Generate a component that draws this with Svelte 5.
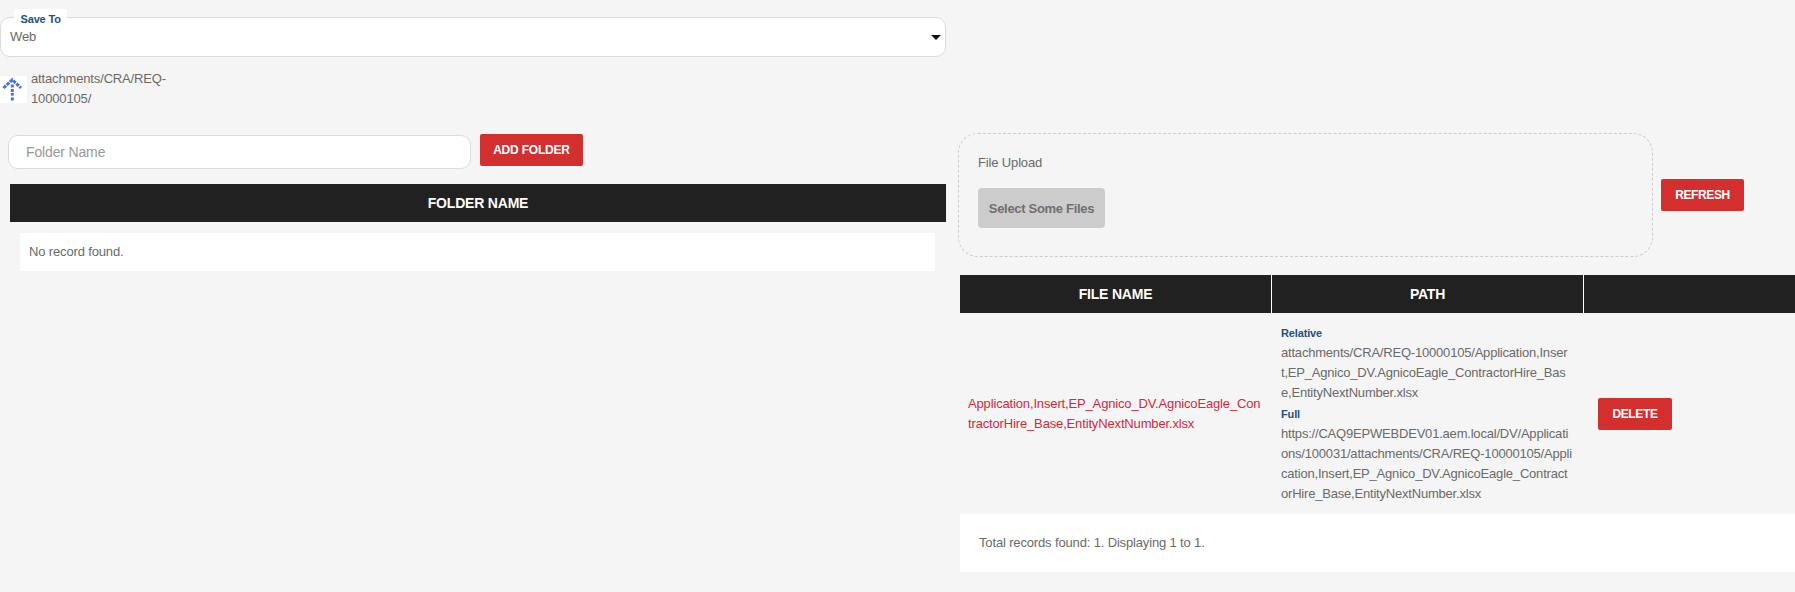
<script lang="ts">
  const path = "attachments/CRA/REQ-10000105/";
  const fileName = "Application,Insert,EP_Agnico_DV.AgnicoEagle_ContractorHire_Base,EntityNextNumber.xlsx";
  // the path cell wraps mid-word, lines kept as they fall on screen
  const relative = [
    "attachments/CRA/REQ-10000105/Application,Inser",
    "t,EP_Agnico_DV.AgnicoEagle_ContractorHire_Bas",
    "e,EntityNextNumber.xlsx",
  ];
  const full = [
    "https://CAQ9EPWEBDEV01.aem.local/DV/Applicati",
    "ons/100031/attachments/CRA/REQ-10000105/Appli",
    "cation,Insert,EP_Agnico_DV.AgnicoEagle_Contract",
    "orHire_Base,EntityNextNumber.xlsx",
  ];
</script>

<div class="page">
  <div class="save-to">
    <span class="legend">Save To</span>
    <div class="select">
      <span>Web</span>
      <i class="caret"></i>
    </div>
  </div>

  <div class="crumb">
    <svg class="up" width="27" height="27" viewBox="0 0 27 27" aria-hidden="true">
      <rect width="27" height="27" fill="#fff" />
      <polyline points="3.5,12 12.3,3.8 21,12" fill="none" stroke="#4a6fe0" stroke-width="3" stroke-dasharray="3.4 1" />
      <g fill="#4a6fe0">
        <rect x="10.8" y="8.5" width="3" height="3" />
        <rect x="10.8" y="13" width="3" height="3" />
        <rect x="10.8" y="17" width="3" height="2.6" />
        <rect x="10.8" y="21.5" width="3" height="3" />
      </g>
    </svg>
    <span class="crumb-text">{path}</span>
  </div>

  <div class="columns">
    <section class="left">
      <div class="add-row">
        <div class="input">Folder Name</div>
        <button class="btn add">ADD FOLDER</button>
      </div>
      <div class="thead single"><div>FOLDER NAME</div></div>
      <div class="empty">No record found.</div>
    </section>

    <section class="right">
      <div class="upload-row">
        <div class="dropzone">
          <div class="dz-label">File Upload</div>
          <button class="pick">Select Some Files</button>
        </div>
        <button class="btn refresh">REFRESH</button>
      </div>

      <div class="thead triple">
        <div>FILE NAME</div>
        <div>PATH</div>
        <div></div>
      </div>
      <div class="row">
        <a class="fname" href="#top">{fileName}</a>
        <div class="paths">
          <div class="cap">Relative</div>
          {#each relative as line}
            <div>{line}</div>
          {/each}
          <div class="cap full">Full</div>
          {#each full as line}
            <div>{line}</div>
          {/each}
        </div>
        <div class="act"><button class="btn del">DELETE</button></div>
      </div>
      <div class="footer">Total records found: 1. Displaying 1 to 1.</div>
    </section>
  </div>
</div>

<style>
  :global(body) {
    margin: 0;
    background: #f5f5f5;
  }
  .page {
    height: 592px;
    overflow: hidden;
    font-family: "Liberation Sans", Arial, sans-serif;
    font-size: 13px;
    line-height: 20px;
    letter-spacing: -0.15px;
    color: #6a6a6a;
    background: #f5f5f5;
  }
  .save-to {
    position: relative;
    width: 946px;
    padding-top: 17px;
  }
  .legend {
    position: absolute;
    left: 14px;
    top: 9px;
    padding: 0 6.5px;
    background: #fff;
    font-size: 11px;
    font-weight: 700;
    line-height: 20px;
    height: 14px;
    color: #1d5180;
  }
  .select {
    height: 40px;
    box-sizing: border-box;
    display: flex;
    justify-content: space-between;
    align-items: flex-start;
    padding: 9px 4px 0 9px;
    background: #fff;
    border: 1px solid #dcdcdc;
    border-radius: 10px;
    line-height: 20px;
  }
  .caret {
    margin-top: 8px;
    width: 0;
    height: 0;
    border-left: 5px solid transparent;
    border-right: 5px solid transparent;
    border-top: 5px solid #111;
  }
  .crumb {
    display: flex;
    align-items: flex-start;
    gap: 4px;
    margin-top: 19px;
    height: 58px;
  }
  .up {
    flex: none;
  }
  .crumb-text {
    width: 140px;
    margin-top: -7px;
  }
  .columns {
    display: flex;
    align-items: flex-start;
  }
  .left {
    width: 946px;
    flex: none;
  }
  .add-row {
    display: flex;
    align-items: flex-start;
    gap: 9px;
    padding-left: 8px;
    height: 50px;
  }
  .input {
    width: 463px;
    height: 34px;
    box-sizing: border-box;
    margin-top: 1px;
    padding: 6px 17px;
    background: #fff;
    border: 1px solid #dcdcdc;
    border-radius: 10px;
    font-size: 14px;
    color: #999;
  }
  .btn {
    display: block;
    height: 32px;
    padding: 0;
    background: #d32f2f;
    border: 0;
    border-radius: 2px;
    color: #fff;
    font-family: "Liberation Sans", Arial, sans-serif;
    font-size: 12px;
    font-weight: 700;
    letter-spacing: -0.2px;
  }
  .add {
    width: 103px;
  }
  .thead {
    display: grid;
    height: 38px;
    background: #212121;
    color: #fff;
    font-size: 14px;
    font-weight: 700;
    line-height: 38px;
    letter-spacing: -0.2px;
    text-align: center;
  }
  .thead.single {
    margin-left: 10px;
  }
  .thead.triple {
    grid-template-columns: 311px 312px 1fr;
    margin-top: 18px;
    margin-left: 1px;
  }
  .triple > div + div {
    border-left: 1px solid #fff;
  }
  .empty {
    margin: 11px 11px 0 20px;
    padding: 9px 9px;
    background: #fff;
  }
  .right {
    flex: 1;
    min-width: 0;
    padding-left: 13px;
    margin-top: -1px;
  }
  .upload-row {
    display: flex;
    align-items: flex-start;
    gap: 8px;
    margin-left: -1px;
  }
  .dropzone {
    width: 695px;
    height: 124px;
    box-sizing: border-box;
    padding: 19px 19px 0;
    border: 1px dashed #ccc;
    border-radius: 20px;
  }
  .pick {
    display: block;
    margin-top: 15px;
    width: 127px;
    height: 40px;
    padding: 0;
    background: #ccc;
    border: 0;
    border-radius: 4px;
    color: #6f6f6f;
    font-family: "Liberation Sans", Arial, sans-serif;
    font-size: 13px;
    font-weight: 700;
    letter-spacing: -0.3px;
  }
  .refresh {
    margin-top: 46px;
    width: 83px;
    letter-spacing: -0.4px;
  }
  .row {
    display: grid;
    grid-template-columns: 311px 312px 1fr;
    align-items: center;
    height: 201px;
    margin-left: 1px;
  }
  .fname {
    padding: 0 8px;
    color: #d62839;
    text-decoration: none;
    word-break: break-all;
  }
  .paths {
    padding-left: 10px;
    letter-spacing: -0.2px;
    white-space: nowrap;
  }
  .cap {
    font-size: 11px;
    font-weight: 700;
    color: #1d5180;
    line-height: 19px;
    letter-spacing: -0.15px;
  }
  .cap.full {
    margin-top: 2px;
  }
  .act {
    padding-left: 15px;
  }
  .del {
    width: 74px;
    letter-spacing: -0.35px;
  }
  .footer {
    height: 58px;
    margin-left: 1px;
    padding-left: 19px;
    background: #fff;
    line-height: 58px;
  }
</style>
